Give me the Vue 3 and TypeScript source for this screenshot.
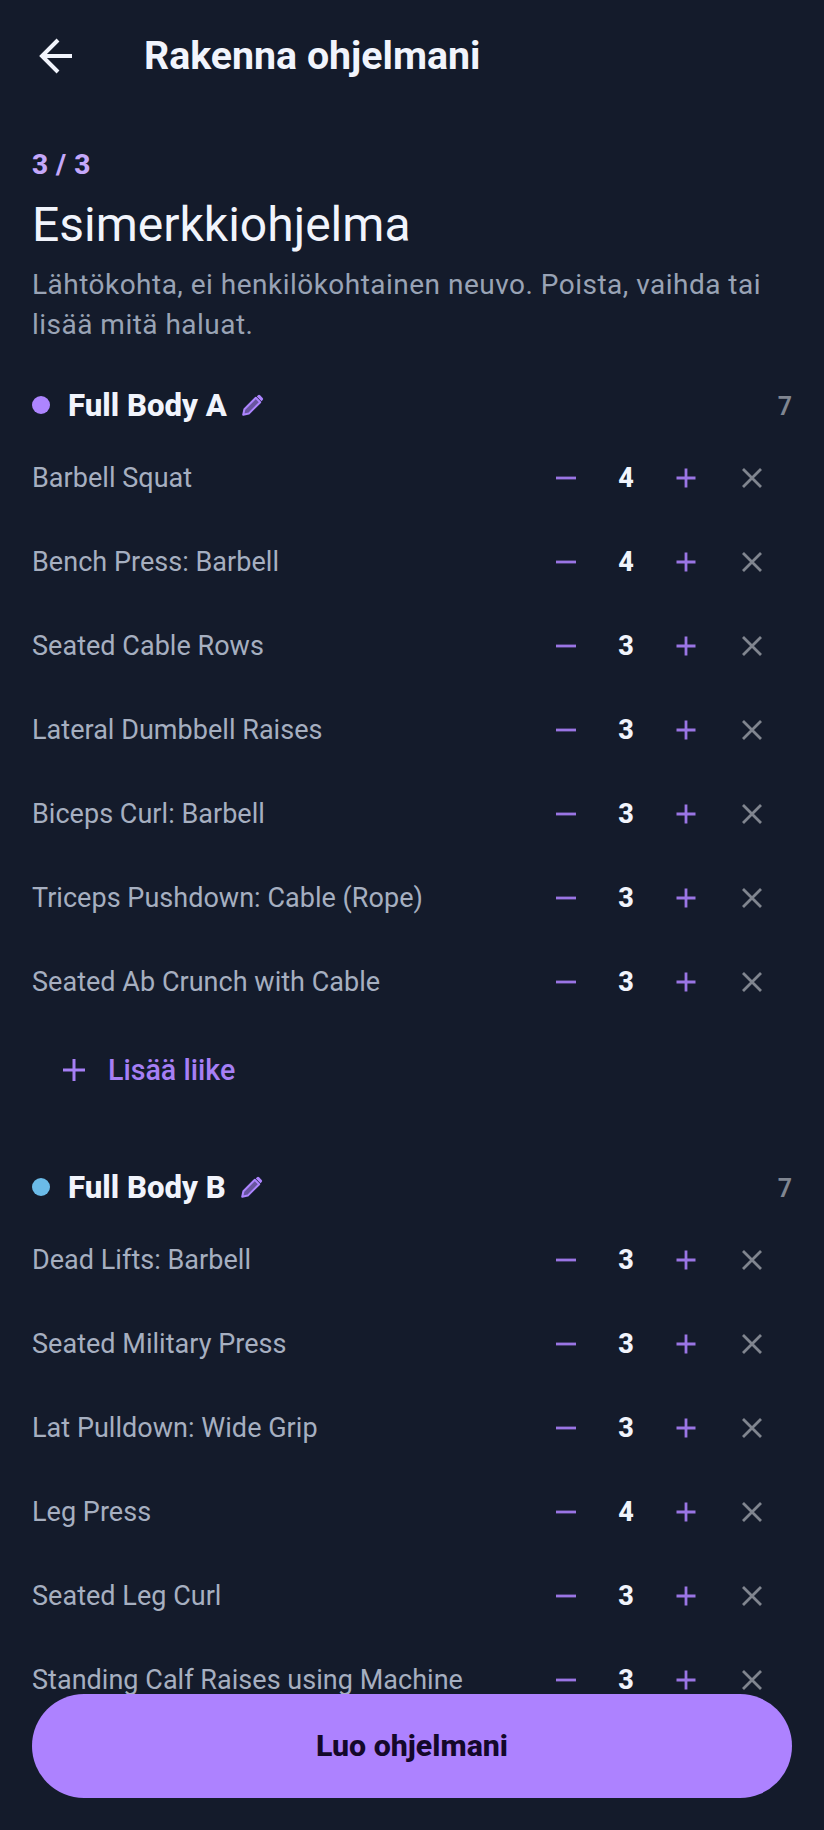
<script setup lang="ts">
interface Exercise {
  name: string;
  sets: number;
}
interface Day {
  title: string;
  color: string;
  count: number;
  exercises: Exercise[];
  addButton: boolean;
}

const days: Day[] = [
  {
    title: "Full Body A",
    color: "#ad85ff",
    count: 7,
    addButton: true,
    exercises: [
      { name: "Barbell Squat", sets: 4 },
      { name: "Bench Press: Barbell", sets: 4 },
      { name: "Seated Cable Rows", sets: 3 },
      { name: "Lateral Dumbbell Raises", sets: 3 },
      { name: "Biceps Curl: Barbell", sets: 3 },
      { name: "Triceps Pushdown: Cable (Rope)", sets: 3 },
      { name: "Seated Ab Crunch with Cable", sets: 3 },
    ],
  },
  {
    title: "Full Body B",
    color: "#6bbbe8",
    count: 7,
    addButton: false,
    exercises: [
      { name: "Dead Lifts: Barbell", sets: 3 },
      { name: "Seated Military Press", sets: 3 },
      { name: "Lat Pulldown: Wide Grip", sets: 3 },
      { name: "Leg Press", sets: 4 },
      { name: "Seated Leg Curl", sets: 3 },
      { name: "Standing Calf Raises using Machine", sets: 3 },
    ],
  },
];
</script>

<template>
  <div class="screen">
    <header class="topbar">
      <button class="back" aria-label="Takaisin">
        <svg width="40" height="40" viewBox="0 0 40 40" fill="none">
          <path d="M36 20H6M22 4L6 20l16 16" stroke="#f1f4fc" stroke-width="4" />
        </svg>
      </button>
      <h1 class="title">Rakenna ohjelmani</h1>
    </header>

    <main class="content">
      <div class="step">3 / 3</div>
      <h2 class="heading">Esimerkkiohjelma</h2>
      <p class="lead">Lähtökohta, ei henkilökohtainen neuvo. Poista, vaihda tai lisää mitä haluat.</p>

      <section v-for="day in days" :key="day.title" class="day">
        <div class="day-head">
          <span class="dot" :style="{ background: day.color }"></span>
          <span class="day-title">{{ day.title }}</span>
          <svg class="pencil" width="24" height="24" viewBox="0 0 24 24" fill="none">
            <path d="M2.2 21.8l1.2-5.6L14.8 4.8l4.4 4.4L7.8 20.6z" fill="#ad85ff" fill-opacity="0.55" stroke="#ad85ff" stroke-width="2" stroke-linejoin="round" />
            <path d="M17 2.3a1.5 1.5 0 0 1 2.1 0l2.6 2.6a1.5 1.5 0 0 1 0 2.1l-1.2 1.2-4.7-4.7z" fill="#ad85ff" />
          </svg>
          <span class="day-count">{{ day.count }}</span>
        </div>

        <div v-for="ex in day.exercises" :key="ex.name" class="row">
          <span class="ex-name">{{ ex.name }}</span>
          <svg class="minus" width="20" height="20" viewBox="0 0 20 20">
            <path d="M0 10h20" stroke="#9a75e4" stroke-width="2.8" />
          </svg>
          <span class="sets">{{ ex.sets }}</span>
          <svg class="plus" width="20" height="20" viewBox="0 0 20 20">
            <path d="M0.5 10h19M10 0.5v19" stroke="#9a75e4" stroke-width="2.8" />
          </svg>
          <svg class="remove" width="20" height="20" viewBox="0 0 20 20">
            <path d="M1 1l18 18M19 1L1 19" stroke="#80858f" stroke-width="2.8" />
          </svg>
        </div>

        <button v-if="day.addButton" class="add">
          <svg width="22" height="22" viewBox="0 0 22 22">
            <path d="M0 11h22M11 0v22" stroke="#a67ff5" stroke-width="3" />
          </svg>
          <span>Lisää liike</span>
        </button>
      </section>
    </main>

    <button class="create">Luo ohjelmani</button>
  </div>
</template>

<style>
html,
body {
  margin: 0;
  background: #141b2b;
}
</style>

<style scoped>
.screen {
  position: relative;
  width: 824px;
  height: 1830px;
  overflow: hidden;
  background: #141b2b;
  font-family: Roboto, "Noto Sans", sans-serif;
}
button {
  border: none;
  background: none;
  padding: 0;
  font-family: inherit;
}
.topbar {
  display: flex;
  align-items: center;
  height: 112px;
  padding-left: 36px;
}
.back {
  display: flex;
  width: 108px;
}
.title {
  margin: 0;
  font-size: 39.3px;
  font-weight: 700;
  color: #f1f4fc;
}
.content {
  padding: 35px 32px 0;
}
.step {
  font-size: 28px;
  line-height: 36px;
  font-weight: 800;
  letter-spacing: 0.5px;
  color: #c4a8fa;
}
.heading {
  margin: 11px 0 0;
  font-size: 48px;
  line-height: 62px;
  font-weight: 400;
  color: #f1f4fc;
}
.lead {
  margin: 9px 0 29px;
  font-size: 28px;
  line-height: 40px;
  letter-spacing: 0.48px;
  color: #99a3b5;
}
.day-head {
  display: flex;
  align-items: center;
  height: 62px;
}
.dot {
  width: 18px;
  height: 18px;
  border-radius: 50%;
  margin-right: 18px;
}
.day-title {
  font-size: 31.2px;
  font-weight: 800;
  color: #f1f4fc;
}
.pencil {
  margin-left: 14px;
}
.day-count {
  margin-left: auto;
  padding-top: 2px;
  font-size: 25px;
  font-weight: 600;
  color: #808691;
}
.row {
  display: flex;
  align-items: center;
  height: 84px;
}
.ex-name {
  flex: 1;
  font-size: 27px;
  letter-spacing: 0.03px;
  color: #a6afc0;
}
.sets {
  width: 40px;
  margin: 0 30px;
  text-align: center;
  font-size: 27px;
  font-weight: 800;
  color: #f1f4fc;
}
.remove {
  margin: 0 30px 0 46px;
}
.add {
  display: flex;
  align-items: center;
  gap: 23px;
  height: 92px;
  padding-left: 31px;
  font-size: 28.6px;
  font-weight: 500;
  color: #a67ff5;
}
.day + .day {
  margin-top: 40px;
}
.create {
  position: absolute;
  left: 32px;
  right: 32px;
  top: 1694px;
  height: 104px;
  padding-bottom: 2px;
  border-radius: 52px;
  background: #ad82ff;
  font-size: 30.3px;
  font-weight: 800;
  color: #14082a;
}
</style>
